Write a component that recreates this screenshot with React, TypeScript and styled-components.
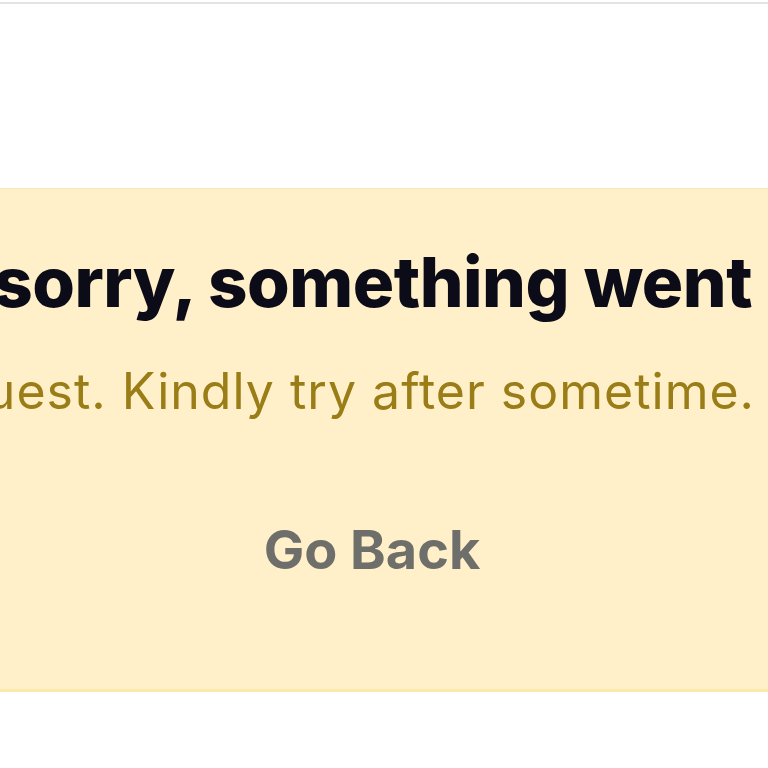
import React from "react";
import styled, { createGlobalStyle } from "styled-components";

const GlobalStyle = createGlobalStyle`
  html, body {
    margin: 0;
    padding: 0;
    background: #ffffff;
  }
  body {
    font-family: "Inter", "Noto Sans", sans-serif;
    overflow: hidden;
  }
`;

const Page = styled.div`
  width: 768px;
  height: 768px;
  display: flex;
  flex-direction: column;
  overflow: hidden;
`;

const TopRule = styled.div`
  margin-top: 2px;
  height: 2px;
  background: #e3e3e3;
  flex-shrink: 0;
`;

const Spacer = styled.div`
  height: 184px;
  flex-shrink: 0;
`;

const Banner = styled.section`
  height: 504px;
  flex-shrink: 0;
  box-sizing: border-box;
  background: #fff0c9;
  border-top: 1px solid #f6e7bd;
  border-bottom: 3px solid #fbeaa9;
  display: flex;
  flex-direction: column;
  overflow: hidden;
  padding-top: 59px;
`;

const Line = styled.div<{ $right: number }>`
  display: flex;
  justify-content: flex-end;
  padding-right: ${(p) => p.$right}px;
  white-space: nowrap;
`;

const Heading = styled.h1`
  margin: 0;
  font-family: "Inter", "Noto Sans", sans-serif;
  font-weight: 800;
  font-size: 69px;
  line-height: 68px;
  letter-spacing: -0.5px;
  color: #0c0c18;
`;

const Subtitle = styled.p`
  margin: 50px 0 0 0;
  font-family: "Inter", "Noto Sans", sans-serif;
  font-weight: 400;
  font-size: 50px;
  line-height: 50px;
  letter-spacing: 1px;
  color: #9a7d16;
`;

const ButtonRow = styled.div`
  display: flex;
  justify-content: center;
  padding-right: 24px;
  margin-top: 107px;
`;

const BackButton = styled.button`
  border: none;
  background: transparent;
  padding: 0;
  font-family: "Inter", "Noto Sans", sans-serif;
  font-weight: 700;
  font-size: 54px;
  line-height: 54px;
  letter-spacing: 0px;
  color: #6e6e6b;
  cursor: pointer;
`;

export default function App() {
  return (
    <>
      <GlobalStyle />
      <Page>
        <TopRule />
        <Spacer />
        <Banner>
          <Line $right={16}>
            <Heading>We're sorry, something went</Heading>
          </Line>
          <Line $right={13}>
            <Subtitle>
              We are unable to process your request. Kindly try after sometime.
            </Subtitle>
          </Line>
          <ButtonRow>
            <BackButton>Go Back</BackButton>
          </ButtonRow>
        </Banner>
      </Page>
    </>
  );
}
